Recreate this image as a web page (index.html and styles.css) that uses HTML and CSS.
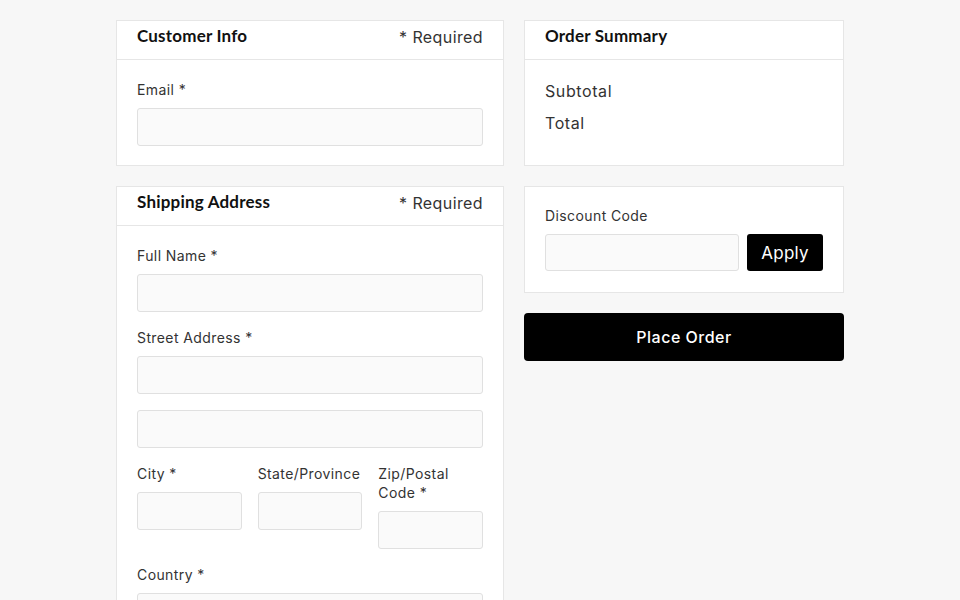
FILE: index.html
```html
<!DOCTYPE html>
<html lang="en">
<head>
	<meta charset="UTF-8">
	<title>Checkout</title>
	<link rel="stylesheet" href="styles.css">
</head>
<body>
	<div class="checkout">
		<div class="col-main">
			<div class="card">
				<div class="card-head">
					<h2>Customer Info</h2>
					<span class="req">* Required</span>
				</div>
				<div class="card-body">
					<div class="field">
						<label>Email *</label>
						<input type="text">
					</div>
				</div>
			</div>

			<div class="card">
				<div class="card-head">
					<h2>Shipping Address</h2>
					<span class="req">* Required</span>
				</div>
				<div class="card-body">
					<div class="field">
						<label>Full Name *</label>
						<input type="text">
					</div>
					<div class="field">
						<label>Street Address *</label>
						<input type="text">
					</div>
					<div class="field">
						<input type="text">
					</div>
					<div class="field-row">
						<div class="field">
							<label>City *</label>
							<input type="text">
						</div>
						<div class="field">
							<label>State/Province</label>
							<input type="text">
						</div>
						<div class="field">
							<label>Zip/Postal Code *</label>
							<input type="text">
						</div>
					</div>
					<div class="field">
						<label>Country *</label>
						<input type="text">
					</div>
				</div>
			</div>
		</div>

		<div class="col-side">
			<div class="card">
				<div class="card-head">
					<h2>Order Summary</h2>
				</div>
				<div class="card-body summary">
					<p>Subtotal</p>
					<p>Total</p>
				</div>
			</div>

			<div class="card">
				<div class="card-body discount-body">
					<label>Discount Code</label>
					<div class="discount">
						<input type="text">
						<button class="btn-apply">Apply</button>
					</div>
				</div>
			</div>

			<button class="btn-order">Place Order</button>
		</div>
	</div>
</body>
</html>
```

FILE: styles.css
```css
*{margin:0;padding:0;box-sizing:border-box}
body{
	background:#f7f7f7;
	font-family:Inter, "Open Sans", sans-serif;
	letter-spacing:.4px;
	color:#2a2a2a;
}
.checkout{
	width:728px;
	margin:20px auto 0;
	display:flex;
	gap:20px;
	align-items:flex-start;
}
.col-main{
	width:388px;
	display:flex;
	flex-direction:column;
	gap:20px;
}
.col-side{
	flex:1;
	display:flex;
	flex-direction:column;
	gap:20px;
}
.card{
	background:#fff;
	border:1px solid #e6e6e6;
}
.card-head{
	height:39px;
	padding:4px 20px 0;
	border-bottom:1px solid #e6e6e6;
	display:flex;
	justify-content:space-between;
	align-items:flex-start;
}
.card-head h2{
	font-family:Lato, sans-serif;
	font-size:17px;
	line-height:22px;
	font-weight:700;
	letter-spacing:.2px;
	color:#111;
}
.card-head .req{
	font-size:16px;
	line-height:22px;
	margin-top:1px;
	color:#333;
}
.card-body{
	padding:20px 20px 19px;
}
label{
	display:block;
	font-size:14px;
	line-height:19px;
	color:#333;
	margin-bottom:9px;
}
input{
	display:block;
	width:100%;
	height:38px;
	background:#fafafa;
	border:1px solid #e0e0e0;
	border-radius:3px;
	font:inherit;
	padding:0 10px;
}
.field{
	margin-bottom:16px;
}
.card-body .field:last-child{
	margin-bottom:0;
}
.field-row{
	display:flex;
	gap:16px;
	margin-bottom:16px;
}
.field-row .field{
	flex:1;
	margin-bottom:0;
}
.summary{
	padding:15px 20px 26px;
}
.summary p{
	font-size:16px;
	line-height:32px;
	color:#333;
	letter-spacing:.6px;
}
.discount-body{
	padding:19px 20px 21px;
}
.discount{
	display:flex;
	gap:8px;
}
.discount input{
	width:194px;
	height:37px;
}
.btn-apply{
	width:76px;
	height:37px;
	background:#000;
	color:#fff;
	border:none;
	border-radius:3px;
	font:inherit;
	font-size:17px;
	letter-spacing:.2px;
	cursor:pointer;
}
.btn-order{
	height:48px;
	background:#000;
	color:#fff;
	border:none;
	border-radius:4px;
	font:inherit;
	font-size:16px;
	font-weight:500;
	letter-spacing:.5px;
	cursor:pointer;
}
```
